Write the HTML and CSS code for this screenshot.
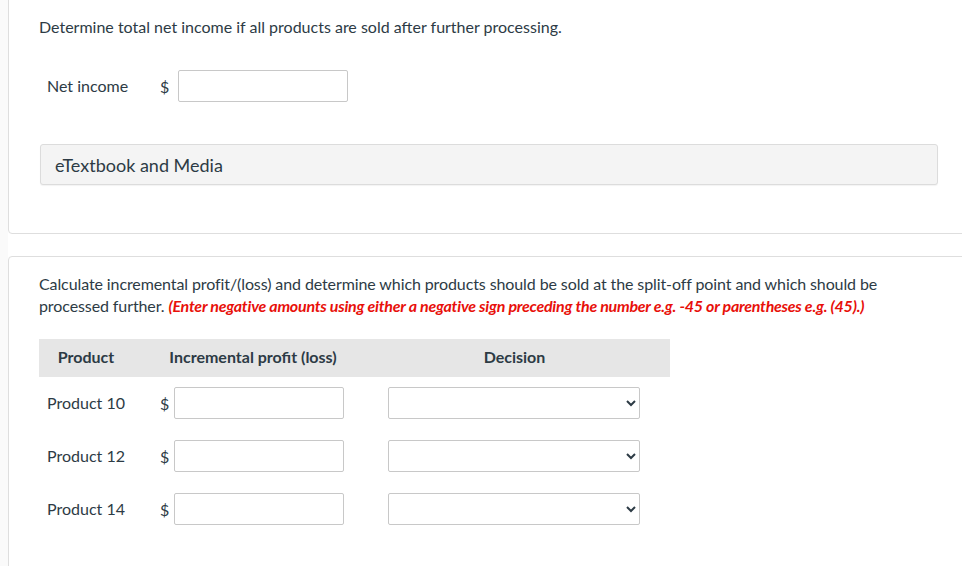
FILE: index.html
```html
<!DOCTYPE html>
<html>
<head>
<meta charset="utf-8">
<link rel="stylesheet" href="styles.css">
</head>
<body>
<div class="page">
  <section class="card card-first">
    <p class="prompt">Determine total net income if all products are sold after further processing.</p>
    <div class="net-row">
      <span class="net-label">Net income</span>
      <span class="dollar">$</span>
      <input class="field net-field" type="text">
    </div>
    <div class="media-box">eTextbook and Media</div>
  </section>

  <section class="card card-second">
    <p class="prompt prompt-long">Calculate incremental profit/(loss) and determine which products should be sold at the split-off point and which should be processed further. <em class="hint">(Enter negative amounts using either a negative sign preceding the number e.g. -45 or parentheses e.g. (45).)</em></p>
    <div class="table">
      <div class="thead">
        <div class="th">Product</div>
        <div class="th">Incremental profit (loss)</div>
        <div class="th th-decision">Decision</div>
      </div>
      <div class="trow">
        <div class="cell-product">Product 10</div>
        <div class="cell-profit"><span class="dollar-sm">$</span><input class="field profit-field" type="text"></div>
        <div class="cell-decision"><select class="choice"><option></option></select></div>
      </div>
      <div class="trow">
        <div class="cell-product">Product 12</div>
        <div class="cell-profit"><span class="dollar-sm">$</span><input class="field profit-field" type="text"></div>
        <div class="cell-decision"><select class="choice"><option></option></select></div>
      </div>
      <div class="trow">
        <div class="cell-product">Product 14</div>
        <div class="cell-profit"><span class="dollar-sm">$</span><input class="field profit-field" type="text"></div>
        <div class="cell-decision"><select class="choice"><option></option></select></div>
      </div>
    </div>
  </section>
</div>
</body>
</html>
```

FILE: styles.css
```css
html, body {
  margin: 0;
  padding: 0;
  overflow: hidden;
  background: #fafafa;
}

body {
  font-family: Lato, "Liberation Sans", sans-serif;
  color: #2d3b45;
  font-size: 16px;
}

.page {
  padding-left: 8px;
  height: 566px;
  overflow: hidden;
  background: linear-gradient(to right, #fafafa 0, #fafafa 8px, #ffffff 8px);
}

.card {
  background: #ffffff;
  border: 1px solid #dedede;
  border-radius: 4px;
  margin-right: -8px;
  padding-left: 30px;
  padding-right: 31px;
}

.card-first {
  margin-top: -4px;
  padding-top: 19px;
  padding-bottom: 48px;
}

.card-second {
  margin-top: 22px;
  padding-top: 16px;
  padding-bottom: 60px;
}

.prompt {
  margin: 0;
  line-height: 22px;
}

.prompt-long {
  letter-spacing: -0.1px;
}

.hint {
  color: #e8100a;
  font-weight: 700;
  font-style: italic;
  letter-spacing: -0.25px;
}

.net-row {
  display: flex;
  align-items: center;
  margin-top: 32px;
  height: 32px;
}

.net-label {
  padding-left: 8px;
  width: 113px;
  line-height: 20px;
  margin-top: -1px;
}

.dollar {
  width: 18px;
}

.field {
  box-sizing: border-box;
  height: 32px;
  border: 1px solid #c8c8c8;
  border-radius: 2px;
  background: #ffffff;
  margin: 0;
  padding: 0 6px;
  font: inherit;
}

.net-field {
  width: 170px;
}

.media-box {
  margin-top: 42px;
  margin-left: 1px;
  height: 41px;
  box-sizing: border-box;
  background: #f4f4f4;
  border: 1px solid #dcdcdc;
  border-radius: 3px;
  box-shadow: 0 1px 1px rgba(0,0,0,0.05);
  display: flex;
  align-items: center;
  padding-left: 14px;
  font-size: 18px;
}

.table {
  margin-top: 22px;
  width: 631px;
}

.thead {
  display: grid;
  grid-template-columns: 94px 240px 297px;
  height: 38px;
  align-items: center;
  background: #e6e6e6;
  font-weight: 700;
}

.th {
  text-align: center;
  line-height: 20px;
  margin-bottom: 3px;
}

.th-decision {
  padding-right: 14px;
}

.trow {
  display: grid;
  grid-template-columns: 94px 240px 297px;
  align-items: center;
  height: 32px;
  margin-top: 21px;
}

.thead + .trow {
  margin-top: 10px;
}

.cell-product {
  padding-left: 8px;
  line-height: 20px;
  margin-top: -1px;
}

.cell-profit {
  display: flex;
  align-items: center;
  padding-left: 27px;
}

.dollar-sm {
  width: 14px;
}

.profit-field {
  width: 170px;
}

.cell-decision {
  padding-left: 15px;
}

.choice {
  box-sizing: border-box;
  width: 252px;
  height: 32px;
  border: 1px solid #c8c8c8;
  border-radius: 2px;
  background: #ffffff;
  font: inherit;
  color: #2d3b45;
  margin: 0;
}
```
